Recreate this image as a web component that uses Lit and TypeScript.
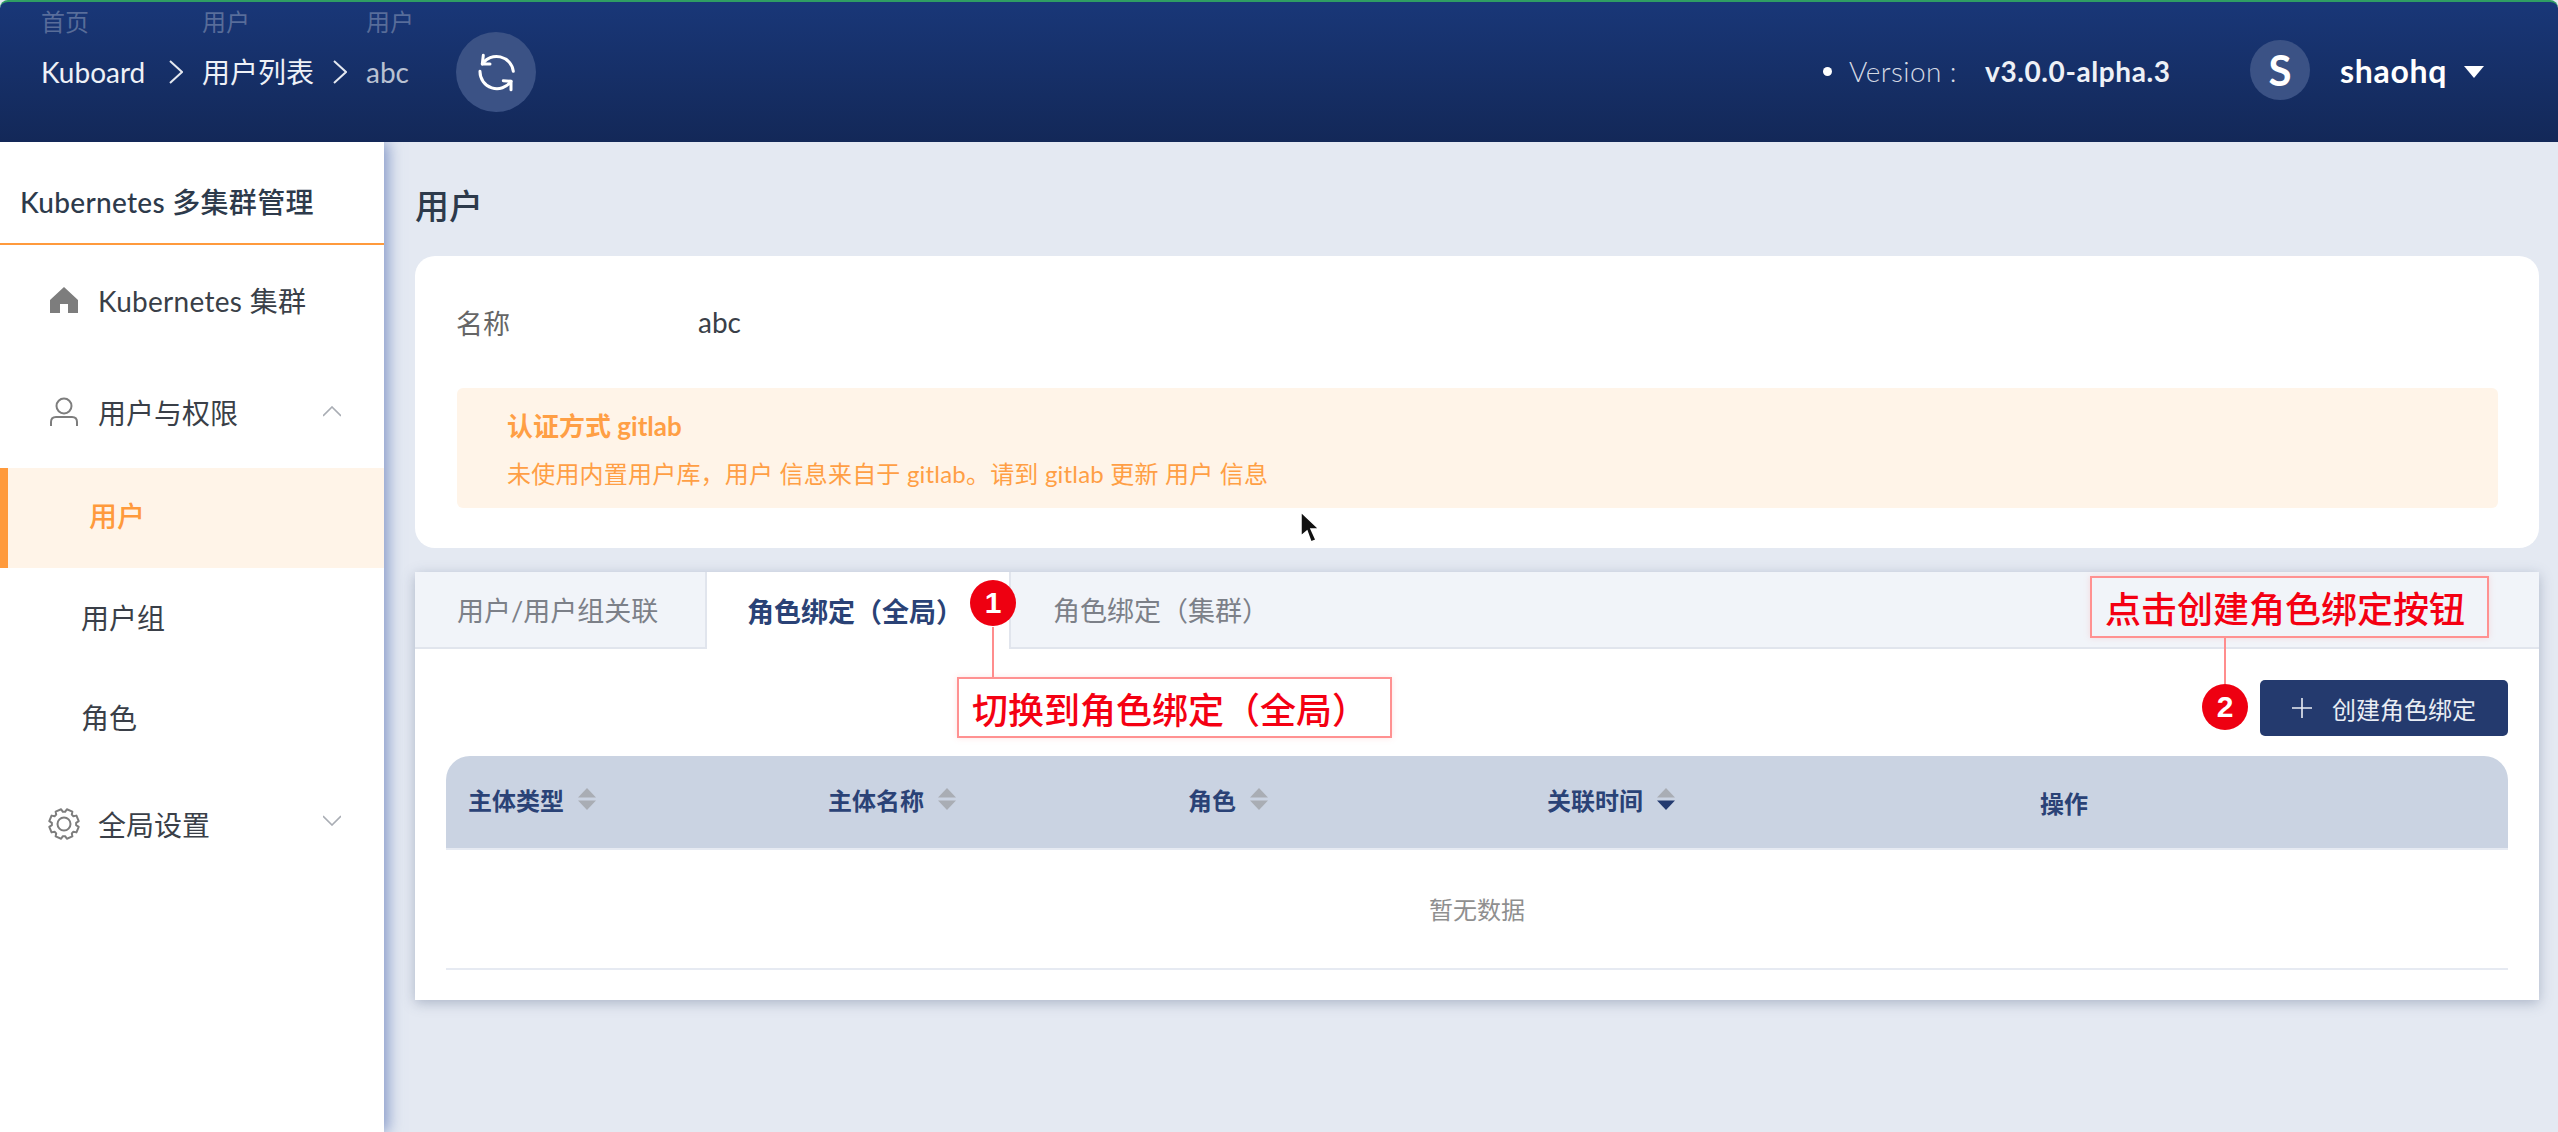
import { LitElement, html, css } from "lit";
import { customElement } from "lit/decorators.js";

const sortIcon = (active = false) => html`<svg class="sort" viewBox="0 0 20 24" width="20" height="24">
  <path d="M10 1 L19 10.5 H1 Z" fill="#a9adb4"></path>
  <path d="M10 23 L19 13.5 H1 Z" fill="${active ? "#233a6f" : "#a9adb4"}"></path></svg>`;

const gearPath = () => {
  const pts: string[] = [];
  const cx = 17, cy = 16;
  for (let i = 0; i < 8; i++) {
    const a = (i * Math.PI) / 4 + Math.PI / 8;
    for (const [off, r] of [[-0.3, 12.2], [-0.2, 15], [0.2, 15], [0.3, 12.2]] as const) {
      pts.push(`${(cx + r * Math.cos(a + off)).toFixed(2)} ${(cy + r * Math.sin(a + off)).toFixed(2)}`);
    }
  }
  return "M" + pts.join(" L") + " Z";
};

@customElement("app-root")
export class AppRoot extends LitElement {
  static styles = css`
    :host { display: block; width: 2558px; height: 1132px; font-family: "Lato","Noto Sans CJK SC",sans-serif; background: #e4e9f2; position: relative; overflow: hidden; }
    * { box-sizing: border-box; }
    .top { height: 142px; border-top: 2px solid #2f9e63; border-radius: 8px 8px 0 0; background: linear-gradient(180deg,#193778 0%,#132858 100%); display: flex; align-items: center; color: #fff; position: relative; z-index: 2; }
    .crumbs { display: grid; grid-template-columns: 161px 164px 90px; align-self: flex-start; margin-top: 5px; margin-left: 41px; font-size: 28px; }
    .ghost { color: rgba(255,255,255,.28); font-size: 24px; line-height: 30px; height: 30px; margin-bottom: 15px; }
    .crumb { line-height: 40px; position: relative; color: #eef1f7; white-space: nowrap; }
    .crumb.cur { color: #b9c1d2; }
    .chev { position: absolute; right: 19px; top: 8px; }
    .refresh { width: 80px; height: 80px; border-radius: 50%; background: #3b5285; display: flex; align-items: center; justify-content: center; }
    .spacer { flex: 1; }
    .dot { width: 9px; height: 9px; border-radius: 50%; background: #fff; margin-right: 17px; margin-top: -1px; }
    .ver { font-size: 28px; color: #d4d9e4; width: 136px; font-weight: 300; margin-top: -2px; white-space: nowrap; letter-spacing: .4px; }
    .vnum { font-size: 28px; font-weight: 700; color: #eef1f7; width: 265px; margin-top: -2px; white-space: nowrap; letter-spacing: .6px; }
    .avatar { width: 60px; height: 60px; border-radius: 50%; background: #3b5285; display: flex; align-items: center; justify-content: center; font-size: 42px; font-weight: 700; margin-right: 30px; margin-top: -4px; }
    .user { font-size: 32px; font-weight: 700; width: 124px; margin-top: -4px; letter-spacing: .7px; }
    .caret { width: 0; height: 0; border-left: 10px solid transparent; border-right: 10px solid transparent; border-top: 12px solid #fff; margin-right: 74px; margin-top: -1px; }
    .body { display: flex; height: 990px; }
    .side { width: 384px; background: #fff; box-shadow: 4px 0 14px rgba(100,125,185,.75); position: relative; z-index: 1; flex: none; color: #333c48; }
    .side-title { height: 103px; border-bottom: 2px solid #ff9a3c; padding: 41px 0 0 20px; font-size: 28px; line-height: 38px; color: #2d3a4b; font-weight: 500; white-space: nowrap; letter-spacing: .3px; }
    .mi { display: flex; align-items: center; padding-left: 47px; font-size: 28px; white-space: nowrap; position: relative; color: #3a3f48; }
    .mi.a { height: 95px; margin-top: 8px; padding-bottom: 2px; letter-spacing: .3px; }
    .mi.b { height: 120px; padding-top: 7px; }
    .mi.c { height: 114px; padding-bottom: 2px; }
    .ico { width: 34px; display: flex; justify-content: center; margin-right: 17px; }
    .arrow { position: absolute; left: 323px; }
    .mi.c .arrow { margin-top: -8px; }
    .sub { height: 100px; display: flex; align-items: center; padding-left: 81px; padding-bottom: 2px; font-size: 28px; color: #3a3f48; }
    .sub.on { background: #fff4e8; color: #ff9a3c; border-left: 8px solid #ff9a3c; font-weight: 500; padding-bottom: 6px; }
    .main { flex: 1; padding: 0 19px 0 31px; min-width: 0; }
    h1 { margin: 0; font-size: 34px; font-weight: 500; color: #2d3a4b; height: 114px; padding-top: 42px; line-height: 44px; }
    .card { height: 292px; background: #fff; border-radius: 20px; padding: 40px 41px 0 41px; }
    .row { display: flex; height: 52px; align-items: center; color: #666; }
    .row .k { width: 242px; font-size: 27px; }
    .row .v { color: #3a3f48; font-size: 28px; }
    .alert { height: 120px; margin-top: 40px; margin-left: 1px; background: #fff4e8; border-radius: 6px; padding: 19px 50px; color: #ff9f45; }
    .alert b { display: block; font-size: 26px; line-height: 38px; font-weight: 700; }
    .alert p { margin: 11px 0 0; font-size: 24px; line-height: 36px; white-space: nowrap; letter-spacing: .2px; }
    .tabs { margin-top: 24px; height: 428px; width: 2124px; background: #fff; box-shadow: 0 3px 12px rgba(70,85,120,.35); }
    .tabbar { display: flex; height: 77px; background: #f1f4f9; border-bottom: 2px solid #e1e5ed; font-size: 27px; color: #7c8088; }
    .tab { display: flex; align-items: center; padding: 0 42px; white-space: nowrap; }
    .tab.t1 { width: 290px; }
    .tab.on { width: 306px; background: #fff; color: #2a4276; font-weight: 700; height: 77px; border-left: 2px solid #e1e5ed; border-right: 2px solid #e1e5ed; padding-left: 40px; }
    .pane { padding: 31px 31px 0; }
    .toolbar { display: flex; justify-content: flex-end; height: 56px; }
    .btn { width: 248px; height: 56px; background: #243a6e; border-radius: 5px; color: #e9edf4; font-size: 24px; display: flex; align-items: center; padding-left: 32px; gap: 20px; white-space: nowrap; }
    .thead { display: grid; grid-template-columns: 360px 360px 359px 493px 1fr; height: 94px; margin-top: 20px; background: #cad3e2; border-radius: 24px 24px 0 0; border-bottom: 2px solid #e6eaf2; padding-left: 22px; color: #2a4276; font-weight: 700; font-size: 24px; }
    .th { display: flex; align-items: center; gap: 13px; margin-top: -6px; white-space: nowrap; }
    .th.op { margin-top: 0; }
    .empty { height: 120px; display: flex; align-items: center; justify-content: center; color: #8f8f8f; font-size: 24px; border-bottom: 2px solid #e6eaf2; padding-bottom: 2px; }
    .badge { position: absolute; z-index: 3; width: 46px; height: 46px; border-radius: 50%; background: #ee0011; color: #fff; font: 700 30px/46px "Liberation Sans", sans-serif; text-align: center; }
    .b1 { left: 970px; top: 580px; }
    .b2 { left: 2202px; top: 684px; }
    .vline { position: absolute; z-index: 3; width: 2px; background: #ff8d8d; }
    .l1 { left: 992px; top: 627px; height: 50px; }
    .l2 { left: 2224px; top: 638px; height: 46px; }
    .note { position: absolute; z-index: 3; border: 2px solid #ff9191; box-shadow: 0 0 6px rgba(255,145,145,.25); color: #f40012; font-size: 36px; font-weight: 500; display: flex; align-items: center; white-space: nowrap; padding-left: 13px; }
    .n1 { left: 957px; top: 677px; width: 435px; height: 61px; }
    .n2 { left: 2090px; top: 576px; width: 399px; height: 62px; }
    .cursor { position: absolute; z-index: 3; left: 1298px; top: 510px; }
  `;

  render() {
    return html`
      <div class="top">
        <div class="crumbs">
          <div class="ghost">首页</div><div class="ghost">用户</div><div class="ghost">用户</div>
          <div class="crumb">Kuboard${this.chev()}</div>
          <div class="crumb">用户列表${this.chev()}</div>
          <div class="crumb cur">abc</div>
        </div>
        <div class="refresh">
          <svg width="44" height="44" viewBox="0 0 44 44" fill="none" stroke="#fff" stroke-width="3" stroke-linecap="round" stroke-linejoin="round">
            <path d="M39.3 21.3 A17 17 0 0 0 8.3 14"></path><path d="M9.3 5.3 L8.3 14 L16 14"></path>
            <path d="M6 21.3 A17 17 0 0 0 37 31.3"></path><path d="M29.3 30.7 L37 31.3 L37 39.7"></path>
          </svg>
        </div>
        <div class="spacer"></div>
        <div class="dot"></div>
        <div class="ver">Version :</div>
        <div class="vnum">v3.0.0-alpha.3</div>
        <div class="avatar">S</div>
        <div class="user">shaohq</div>
        <div class="caret"></div>
      </div>
      <div class="body">
        <aside class="side">
          <div class="side-title">Kubernetes 多集群管理</div>
          <div class="mi a"><span class="ico"><svg width="28" height="26" viewBox="0 0 28 26"><path fill="#7d7d7d" d="M14 0 L28 13 V26 H18 V17 H10 V26 H0 V13 Z"></path></svg></span>Kubernetes 集群</div>
          <div class="mi b"><span class="ico"><svg width="30" height="30" viewBox="0 0 30 30" fill="none" stroke="#7d7d7d" stroke-width="2"><circle cx="15" cy="9" r="7.5"></circle><path d="M2 29 V25 Q2 20 7 20 H23 Q28 20 28 25 V29"></path></svg></span>用户与权限${this.updown("M0 10 L9 1 L18 10")}</div>
          <div class="sub on">用户</div>
          <div class="sub">用户组</div>
          <div class="sub">角色</div>
          <div class="mi c"><span class="ico"><svg width="34" height="32" viewBox="0 0 34 32" fill="none" stroke="#7d7d7d" stroke-width="2" stroke-linejoin="round"><path d="${gearPath()}"></path><circle cx="17" cy="16" r="6.5"></circle></svg></span>全局设置${this.updown("M0 1 L9 10 L18 1")}</div>
        </aside>
        <main class="main">
          <h1>用户</h1>
          <section class="card">
            <div class="row"><span class="k">名称</span><span class="v">abc</span></div>
            <div class="alert"><b>认证方式 gitlab</b><p>未使用内置用户库，用户 信息来自于 gitlab。请到 gitlab 更新 用户 信息</p></div>
          </section>
          <section class="tabs">
            <div class="tabbar">
              <div class="tab t1">用户/用户组关联</div>
              <div class="tab on">角色绑定（全局）</div>
              <div class="tab">角色绑定（集群）</div>
            </div>
            <div class="pane">
              <div class="toolbar">
                <div class="btn"><svg width="20" height="20" viewBox="0 0 20 20" stroke="#e9edf4" stroke-width="1.6"><path d="M10 0 V20 M0 10 H20"></path></svg>创建角色绑定</div>
              </div>
              <div class="thead">
                <div class="th">主体类型${sortIcon()}</div>
                <div class="th">主体名称${sortIcon()}</div>
                <div class="th">角色${sortIcon()}</div>
                <div class="th">关联时间${sortIcon(true)}</div>
                <div class="th op">操作</div>
              </div>
              <div class="empty">暂无数据</div>
            </div>
          </section>
        </main>
      </div>
      <div class="vline l1"></div>
      <div class="badge b1">1</div>
      <div class="note n1">切换到角色绑定（全局）</div>
      <div class="vline l2"></div>
      <div class="badge b2">2</div>
      <div class="note n2">点击创建角色绑定按钮</div>
      <svg class="cursor" width="24" height="36" viewBox="0 0 24 36"><path d="M3 2 L3 26 L9 21 L13 32 L18 30 L13 19 L21 19 Z" fill="#111" stroke="#fff" stroke-width="1.5"></path></svg>
    `;
  }

  chev() {
    return html`<svg class="chev" width="14" height="24" viewBox="0 0 14 24" fill="none" stroke="#e4e8f0" stroke-width="2"><path d="M1 1 L13 12 L1 23"></path></svg>`;
  }
  updown(d: string) {
    return html`<svg class="arrow" width="18" height="11" viewBox="0 0 18 11" fill="none" stroke="#a9adb4" stroke-width="1.6"><path d="${d}"></path></svg>`;
  }
}
